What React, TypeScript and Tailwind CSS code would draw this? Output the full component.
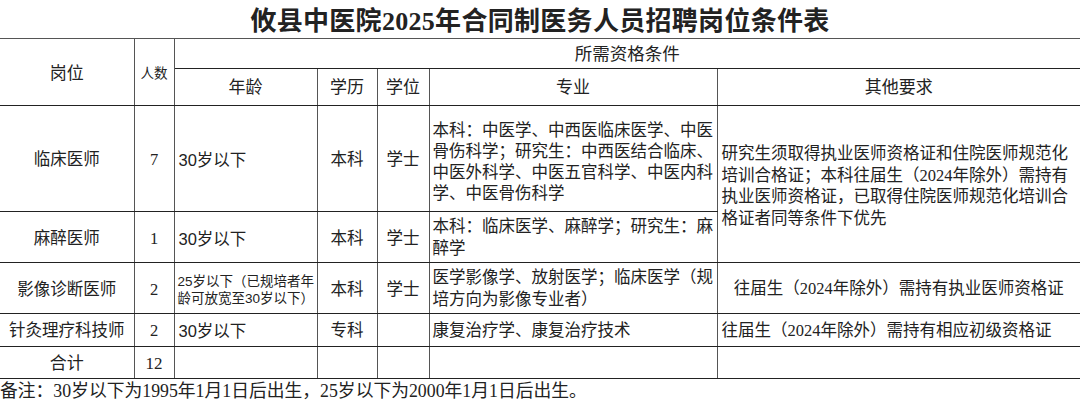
import React from "react";

const serif = "font-['Liberation_Serif','Noto_Sans_CJK_SC',serif]";

export default function App() {
  const bd = "border-b border-r border-b-[#222] border-r-[#555]";
  const bdLast = "border-b border-b-[#222]";
  return (
    <div className={`w-[1080px] h-[405px] bg-white text-[#222] ${serif} overflow-hidden`}>
      <div className="h-[38px] flex items-center justify-center pt-[5px]">
        <h1 className="text-[26px] font-bold tracking-[0.3px] font-['Liberation_Serif','Noto_Sans_CJK_SC',serif]">
          攸县中医院2025年合同制医务人员招聘岗位条件表
        </h1>
      </div>
      <table className="w-[1080px] table-fixed border-collapse border-t border-t-[#555]">
        <colgroup>
          <col className="w-[134px]" />
          <col className="w-[40px]" />
          <col className="w-[143px]" />
          <col className="w-[60px]" />
          <col className="w-[52px]" />
          <col className="w-[288px]" />
          <col className="w-[363px]" />
        </colgroup>
        <thead>
          <tr className="h-[30px]">
            <th rowSpan={2} className={`${bd} font-normal text-[17px] align-middle pt-[4px]`}>岗位</th>
            <th rowSpan={2} className={`${bd} font-normal text-[13.5px] align-middle pt-[4px]`}>人数</th>
            <th colSpan={5} className={`${bdLast} font-normal text-[17.5px] align-middle pt-[2px]`}>所需资格条件</th>
          </tr>
          <tr className="h-[37px]">
            <th className={`${bd} font-normal text-[17px] pt-[2px]`}>年龄</th>
            <th className={`${bd} font-normal text-[17px] pt-[2px]`}>学历</th>
            <th className={`${bd} font-normal text-[17px] pt-[2px]`}>学位</th>
            <th className={`${bd} font-normal text-[17px] pt-[2px]`}>专业</th>
            <th className={`${bdLast} font-normal text-[17px] pt-[2px]`}>其他要求</th>
          </tr>
        </thead>
        <tbody className="text-[16.5px]">
          <tr className="h-[106px]">
            <td className={`${bd} text-center pt-[4px]`}>临床医师</td>
            <td className={`${bd} text-center pt-[4px]`}>7</td>
            <td className={`${bd} pl-[4px] pt-[4px] font-['Liberation_Sans','Noto_Sans_CJK_SC',sans-serif]`}>30岁以下</td>
            <td className={`${bd} text-center pt-[4px]`}>本科</td>
            <td className={`${bd} text-center pt-[4px]`}>学士</td>
            <td className={`${bd} pl-[3px] align-top pt-[14px] leading-[21px]`}>
              本科：中医学、中西医临床医学、中医
              <br />
              骨伤科学；研究生：中西医结合临床、
              <br />
              中医外科学、中医五官科学、中医内科
              <br />
              学、中医骨伤科学
            </td>
            <td rowSpan={2} className={`${bdLast} pl-[4px] leading-[21.5px] pt-[4px]`}>
              研究生须取得执业医师资格证和住院医师规范化
              <br />
              培训合格证；本科往届生（2024年除外）需持有
              <br />
              执业医师资格证，已取得住院医师规范化培训合
              <br />
              格证者同等条件下优先
            </td>
          </tr>
          <tr className="h-[51px]">
            <td className={`${bd} text-center pt-[4px]`}>麻醉医师</td>
            <td className={`${bd} text-center pt-[4px]`}>1</td>
            <td className={`${bd} pl-[4px] pt-[4px] font-['Liberation_Sans','Noto_Sans_CJK_SC',sans-serif]`}>30岁以下</td>
            <td className={`${bd} text-center pt-[4px]`}>本科</td>
            <td className={`${bd} text-center pt-[4px]`}>学士</td>
            <td className={`${bd} pl-[3px] leading-[22px] pt-[2px]`}>
              本科：临床医学、麻醉学；研究生：麻
              <br />
              醉学
            </td>
          </tr>
          <tr className="h-[51px]">
            <td className={`${bd} text-center pt-[4px]`}>影像诊断医师</td>
            <td className={`${bd} text-center pt-[4px]`}>2</td>
            <td className={`${bd} pl-[3px] pt-[3px] text-[13.5px] leading-[17px] whitespace-nowrap overflow-hidden font-['Liberation_Sans','Noto_Sans_CJK_SC',sans-serif]`}>
              25岁以下（已规培者年
              <br />
              龄可放宽至30岁以下）
            </td>
            <td className={`${bd} text-center pt-[4px]`}>本科</td>
            <td className={`${bd} text-center pt-[4px]`}>学士</td>
            <td className={`${bd} pl-[3px] leading-[22px] pt-[2px]`}>
              医学影像学、放射医学；临床医学（规
              <br />
              培方向为影像专业者）
            </td>
            <td className={`${bdLast} text-center pt-[2px]`}>往届生（2024年除外）需持有执业医师资格证</td>
          </tr>
          <tr className="h-[33px]">
            <td className={`${bd} text-center pt-[3px]`}>针灸理疗科技师</td>
            <td className={`${bd} text-center pt-[3px]`}>2</td>
            <td className={`${bd} pl-[4px] pt-[3px] font-['Liberation_Sans','Noto_Sans_CJK_SC',sans-serif]`}>30岁以下</td>
            <td className={`${bd} text-center pt-[3px]`}>专科</td>
            <td className={`${bd}`}></td>
            <td className={`${bd} pl-[3px] pt-[3px]`}>康复治疗学、康复治疗技术</td>
            <td className={`${bdLast} pl-[4px] pt-[3px]`}>往届生（2024年除外）需持有相应初级资格证</td>
          </tr>
          <tr className="h-[32px]">
            <td className={`${bd} text-center pt-[3px] text-[17px]`}>合计</td>
            <td className={`${bd} text-center pt-[3px] text-[17px]`}>12</td>
            <td className={`${bd}`}></td>
            <td className={`${bd}`}></td>
            <td className={`${bd}`}></td>
            <td className={`${bd}`}></td>
            <td className={`${bdLast}`}></td>
          </tr>
        </tbody>
      </table>
      <div className="text-[17.8px] leading-[22px] pt-[1px] whitespace-nowrap">
        备注：30岁以下为1995年1月1日后出生，25岁以下为2000年1月1日后出生。
      </div>
    </div>
  );
}
